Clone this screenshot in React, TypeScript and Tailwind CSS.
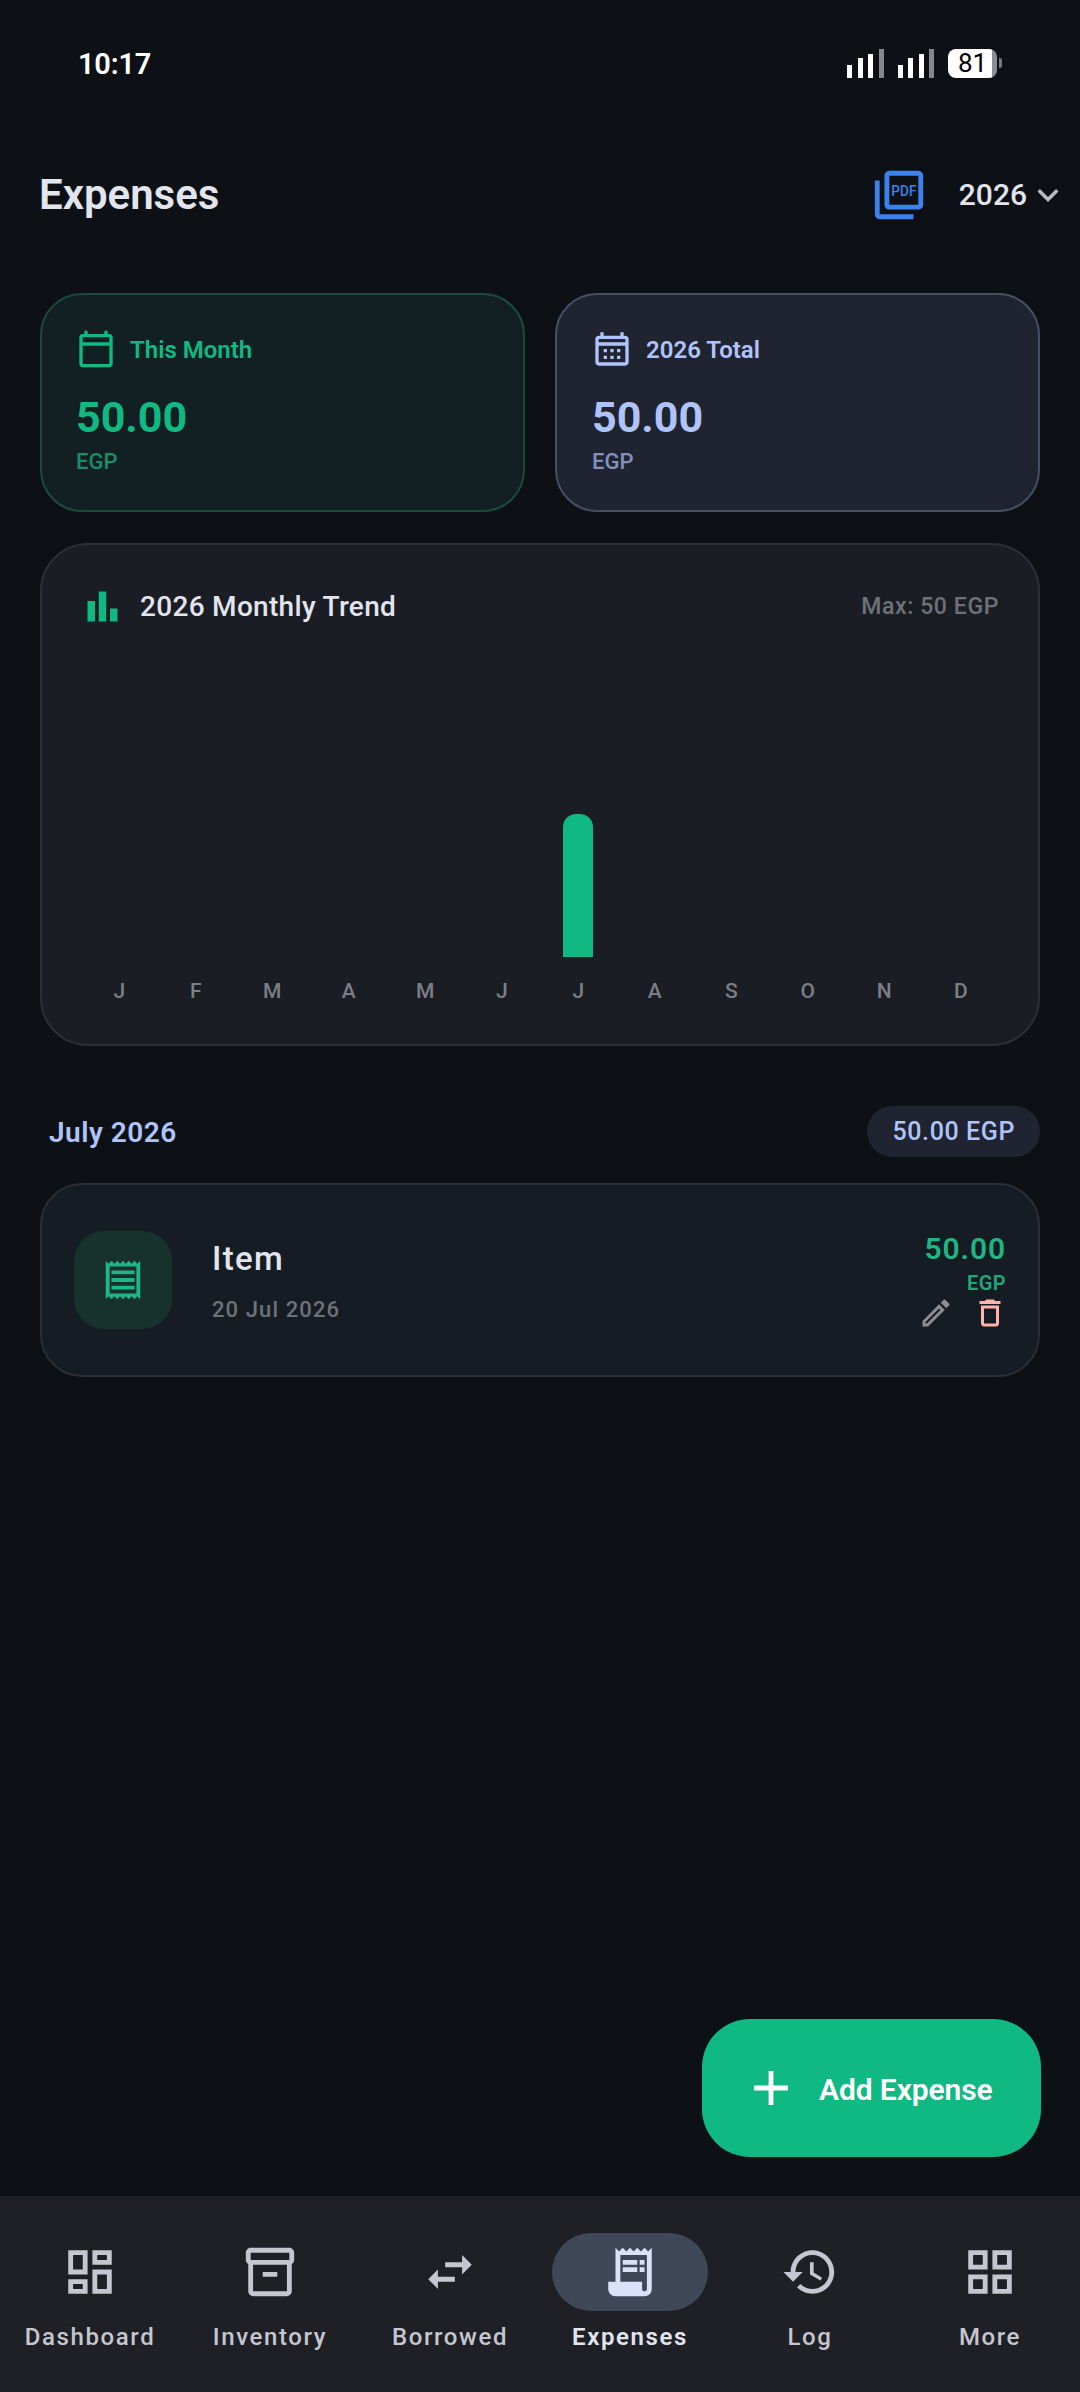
const months = ['J', 'F', 'M', 'A', 'M', 'J', 'J', 'A', 'S', 'O', 'N', 'D'];

function Icon({ d, size, className, children }: { d?: string; size: number; className?: string; children?: React.ReactNode }) {
  return (
    <svg width={size} height={size} viewBox="0 0 24 24" fill="currentColor" className={`shrink-0 ${className ?? ''}`}>
      {d && <path d={d} />}
      {children}
    </svg>
  );
}

const navItems = [
  {
    label: 'Dashboard',
    d: 'M19 5v2h-4V5h4M9 5v6H5V5h4m10 8v6h-4v-6h4M9 17v2H5v-2h4M21 3h-8v6h8V3zM11 3H3v10h8V3zm10 8h-8v10h8V11zm-10 4H3v6h8v-6z',
  },
  {
    label: 'Inventory',
    d: 'M20 2H4c-1 0-2 .9-2 2v3.01c0 .72.43 1.34 1 1.69V20c0 1.1 1.1 2 2 2h14c.9 0 2-.9 2-2V8.7c.57-.35 1-.97 1-1.69V4c0-1.1-1-2-2-2zm-1 18H5V9h14v11zm1-13H4V4h16v3zM9 12h6v2H9z',
  },
  {
    label: 'Borrowed',
    d: 'M6.99 11L3 15l3.99 4v-3H14v-2H6.99v-3zM21 9l-3.99-4v3H10v2h7.01v3L21 9z',
  },
  {
    label: 'Expenses',
    active: true,
    d: 'M19.5 3.5L18 2l-1.5 1.5L15 2l-1.5 1.5L12 2l-1.5 1.5L9 2 7.5 3.5 6 2v14H3v3c0 1.66 1.34 3 3 3h12c1.66 0 3-1.34 3-3V2l-1.5 1.5zM19 19c0 .55-.45 1-1 1s-1-.45-1-1v-3H8V5h11v14zM9 7h6v2H9zM16 7h2v2h-2zM9 10h6v2H9zM16 10h2v2h-2z',
  },
  {
    label: 'Log',
    d: 'M13 3c-4.97 0-9 4.03-9 9H1l3.89 3.89.07.14L9 12H6c0-3.87 3.13-7 7-7s7 3.13 7 7-3.13 7-7 7c-1.93 0-3.68-.79-4.94-2.06l-1.42 1.42C8.27 19.99 10.51 21 13 21c4.97 0 9-4.03 9-9s-4.03-9-9-9zm-1 5v5l4.28 2.54.72-1.21-3.5-2.08V8H12z',
  },
  {
    label: 'More',
    d: 'M3 3v8h8V3H3zm6 6H5V5h4v4zm-6 4v8h8v-8H3zm6 6H5v-4h4v4zm4-16v8h8V3h-8zm6 6h-4V5h4v4zm-6 4v8h8v-8h-8zm6 6h-4v-4h4v4z',
  },
];

function Signal() {
  return (
    <div className="flex items-end gap-[5.5px]">
      <div className="h-[13px] w-[5px] bg-white" />
      <div className="h-[20px] w-[5px] bg-white" />
      <div className="h-[24px] w-[5px] bg-white" />
      <div className="h-[29px] w-[5px] bg-[#85878b]" />
    </div>
  );
}

function StatusBar() {
  return (
    <div className="flex h-[126px] items-center justify-between pl-[78px] pr-[78px]">
      <span className="pt-[3px] text-[29px] font-semibold tracking-[-0.2px] text-white">10:17</span>
      <div className="flex items-center">
        <Signal />
        <div className="ml-[14px]">
          <Signal />
        </div>
        <div className="ml-[14px] flex h-[29px] w-[49px] items-center justify-center rounded-[8px] bg-[linear-gradient(90deg,#ffffff_90%,#8a8c90_90%)] text-[26px] font-normal leading-none text-black">
          81
        </div>
        <div className="ml-[2px] h-[10px] w-[3px] rounded-r-[2px] bg-[#75777b]" />
      </div>
    </div>
  );
}

function Header() {
  return (
    <div className="flex h-[138px] items-center justify-between pl-[39px] pr-[11px]">
      <h1 className="-translate-y-[1px] text-[42px] font-semibold text-[#e2e5ee]">Expenses</h1>
      <div className="flex items-center">
        <Icon
          size={58}
          className="text-[#3b82ea]"
          d="M20 2H8c-1.1 0-2 .9-2 2v12c0 1.1.9 2 2 2h12c1.1 0 2-.9 2-2V4c0-1.1-.9-2-2-2zm0 14H8V4h12v12zM4 6H2v14c0 1.1.9 2 2 2h14v-2H4V6z"
        >
          <text
            x="14"
            y="12.4"
            textAnchor="middle"
            fontSize="6.2"
            fontWeight="500"
            textLength="10.4"
            lengthAdjust="spacingAndGlyphs"
            fontFamily="Roboto, sans-serif"
          >
            PDF
          </text>
        </Icon>
        <span className="ml-[31px] -translate-y-[1px] text-[30px] font-medium text-[#e2e5ee]">2026</span>
        <Icon size={42} className="text-[#b9bbc2]" d="M7.41 8.59L12 13.17l4.59-4.58L18 10l-6 6-6-6 1.41-1.41z" />
      </div>
    </div>
  );
}

function SummaryCards() {
  return (
    <div className="mt-[29px] grid h-[219px] grid-cols-2 gap-[30px]">
      <div className="rounded-[42px] border-2 border-[#1b4a3f] bg-[#122023] pl-[34px] pt-[34px]">
        <div className="flex items-center gap-[14px]">
          <Icon
            size={40}
            className="text-[#10b981]"
            d="M20 3h-1V1h-2v2H7V1H5v2H4c-1.1 0-2 .9-2 2v16c0 1.1.9 2 2 2h16c1.1 0 2-.9 2-2V5c0-1.1-.9-2-2-2zm0 2v3H4V5h16zM4 21V10h16v11H4z"
          />
          <span className="pt-[2px] text-[24px] font-semibold text-[#10b981]">This Month</span>
        </div>
        <p className="mt-[23px] text-[43px] font-bold leading-[50px] text-[#10b981]">50.00</p>
        <p className="mt-[7px] text-[22px] font-medium leading-[26px] text-[#1c8b6a]">EGP</p>
      </div>
      <div className="rounded-[42px] border-2 border-[#474f64] bg-[#1f2430] pl-[35px] pt-[34px]">
        <div className="flex items-center gap-[14px]">
          <Icon
            size={40}
            className="text-[#afc4fb]"
            d="M20 4h-1V2h-2v2H7V2H5v2H4c-1.1 0-2 .9-2 2v14c0 1.1.9 2 2 2h16c1.1 0 2-.9 2-2V6c0-1.1-.9-2-2-2zm0 16H4V10h16v10zM20 8H4V6h16v2zM9 14H7v-2h2zm4 0h-2v-2h2zm4 0h-2v-2h2zM9 18H7v-2h2zm4 0h-2v-2h2zm4 0h-2v-2h2z"
          />
          <span className="pt-[2px] text-[24px] font-semibold text-[#afc4fb]">2026 Total</span>
        </div>
        <p className="mt-[23px] text-[43px] font-bold leading-[50px] text-[#afc4fb]">50.00</p>
        <p className="mt-[7px] text-[22px] font-medium leading-[26px] text-[#8093bd]">EGP</p>
      </div>
    </div>
  );
}

function TrendCard() {
  return (
    <section className="mt-[31px] h-[503px] rounded-[48px] border-2 border-[#2c2f36] bg-[#1a1d24]">
      <div className="flex items-center justify-between pl-[38px] pr-[39px] pt-[39px]">
        <div className="flex items-center gap-[15px]">
          <Icon size={45} className="text-[#10b981]" d="M4 9h4v11H4zM10 4h4v16h-4zM16 13h4v7h-4z" />
          <h2 className="text-[28px] font-medium tracking-[0.3px] text-[#e2e5ee]">2026 Monthly Trend</h2>
        </div>
        <span className="pt-[2px] text-[23px] font-medium tracking-[0.6px] text-[#6f7178]">Max: 50 EGP</span>
      </div>
      <div className="grid h-[328px] grid-cols-12 items-end px-[39px]">
        {months.map((m, i) => (
          <div key={i} className="flex justify-center">
            {i === 6 && <div className="h-[143px] w-[30px] rounded-t-[13px] bg-[#10b981]" />}
          </div>
        ))}
      </div>
      <div className="mt-5 grid grid-cols-12 px-[39px]">
        {months.map((m, i) => (
          <span key={i} className="text-center text-[21px] font-medium leading-[28px] text-[#7d7f86]">
            {m}
          </span>
        ))}
      </div>
    </section>
  );
}

function ExpenseItem() {
  return (
    <div className="mt-[26px] flex h-[194px] items-center rounded-[42px] border-2 border-[#2a2e36] bg-[#161c23] pl-[32px] pr-[32px]">
      <div className="flex h-[98px] w-[98px] items-center justify-center rounded-[30px] bg-[#17312d]">
        <Icon
          size={46}
          className="text-[#1fb584]"
          d="M19.5 3.5L18 2l-1.5 1.5L15 2l-1.5 1.5L12 2l-1.5 1.5L9 2 7.5 3.5 6 2 4.5 3.5 3 2v20l1.5-1.5L6 22l1.5-1.5L9 22l1.5-1.5L12 22l1.5-1.5L15 22l1.5-1.5L18 22l1.5-1.5L21 22V2l-1.5 1.5zM19 19.09H5V4.91h14v14.18zM6 15h12v2H6zm0-4h12v2H6zm0-4h12v2H6z"
        />
      </div>
      <div className="ml-10 flex-1">
        <p className="pt-[2px] text-[33px] font-medium leading-[42px] tracking-[1.3px] text-[#e2e5ee]">Item</p>
        <p className="mt-[16px] text-[22px] font-medium leading-[28px] tracking-[1.1px] text-[#6f7178]">20 Jul 2026</p>
      </div>
      <div className="flex flex-col items-end pt-[2px]">
        <p className="text-[30px] font-semibold leading-[36px] tracking-[0.9px] text-[#1fb584]">50.00</p>
        <p className="mt-1 text-[20px] font-semibold leading-[24px] tracking-[0.4px] text-[#1fa87c]">EGP</p>
        <div className="-mr-[2px] flex gap-[18px]">
          <Icon
            size={36}
            className="text-[#8b8d92]"
            d="M3 17.25V21h3.75L17.81 9.94l-3.75-3.75L3 17.25zM5.92 19H5v-.92l9.06-9.06.92.92L5.92 19zM20.71 5.63l-2.34-2.34c-.2-.2-.45-.29-.71-.29s-.51.1-.7.29l-1.83 1.83 3.75 3.75 1.83-1.83c.39-.39.39-1.02 0-1.41z"
          />
          <Icon
            size={36}
            className="text-[#ffb4ab]"
            d="M16 9v10H8V9h8m-1.5-6h-5l-1 1H5v2h14V4h-3.5l-1-1zM18 7H6v12c0 1.1.9 2 2 2h8c1.1 0 2-.9 2-2V7z"
          />
        </div>
      </div>
    </div>
  );
}

function BottomNav() {
  return (
    <nav className="mt-auto grid h-[196px] grid-cols-6 bg-[#1e2026] pt-[37px]">
      {navItems.map((item) => (
        <div key={item.label} className="flex flex-col items-center">
          <div className={`flex h-[78px] w-[156px] items-center justify-center rounded-full ${item.active ? 'bg-[#3f4859]' : ''}`}>
            <Icon size={58} d={item.d} className={item.active ? 'text-[#dae2f9]' : 'text-[#c5c6d0]'} />
          </div>
          <span
            className={`mt-[11px] text-[24px] leading-[30px] tracking-[1.6px] ${
              item.active ? 'font-semibold text-[#e2e5ee]' : 'font-medium text-[#c5c6d0]'
            }`}
          >
            {item.label}
          </span>
        </div>
      ))}
    </nav>
  );
}

export default function App() {
  return (
    <div className="relative flex h-[2392px] w-[1080px] flex-col bg-[#0d1116] font-['Roboto',sans-serif]">
      <StatusBar />
      <Header />
      <main className="px-10">
        <SummaryCards />
        <TrendCard />
        <div className="mt-[60px] flex h-[51px] items-center justify-between">
          <h3 className="pl-[9px] pt-[2px] text-[28px] font-semibold tracking-[0.5px] text-[#afc4fb]">July 2026</h3>
          <span className="flex h-[51px] items-center rounded-full bg-[#1f2430] px-[25px] text-[25px] font-medium tracking-[0.6px] text-[#afc4fb]">
            50.00 EGP
          </span>
        </div>
        <ExpenseItem />
      </main>
      <button className="absolute bottom-[235px] right-[39px] flex h-[138px] w-[339px] items-center rounded-[48px] bg-[#10b981] pl-[40px] text-white">
        <Icon size={58} d="M19 13h-6v6h-2v-6H5v-2h6V5h2v6h6v2z" />
        <span className="ml-[19px] pt-[2px] text-[30px] font-semibold tracking-[-0.1px]">Add Expense</span>
      </button>
      <BottomNav />
    </div>
  );
}
